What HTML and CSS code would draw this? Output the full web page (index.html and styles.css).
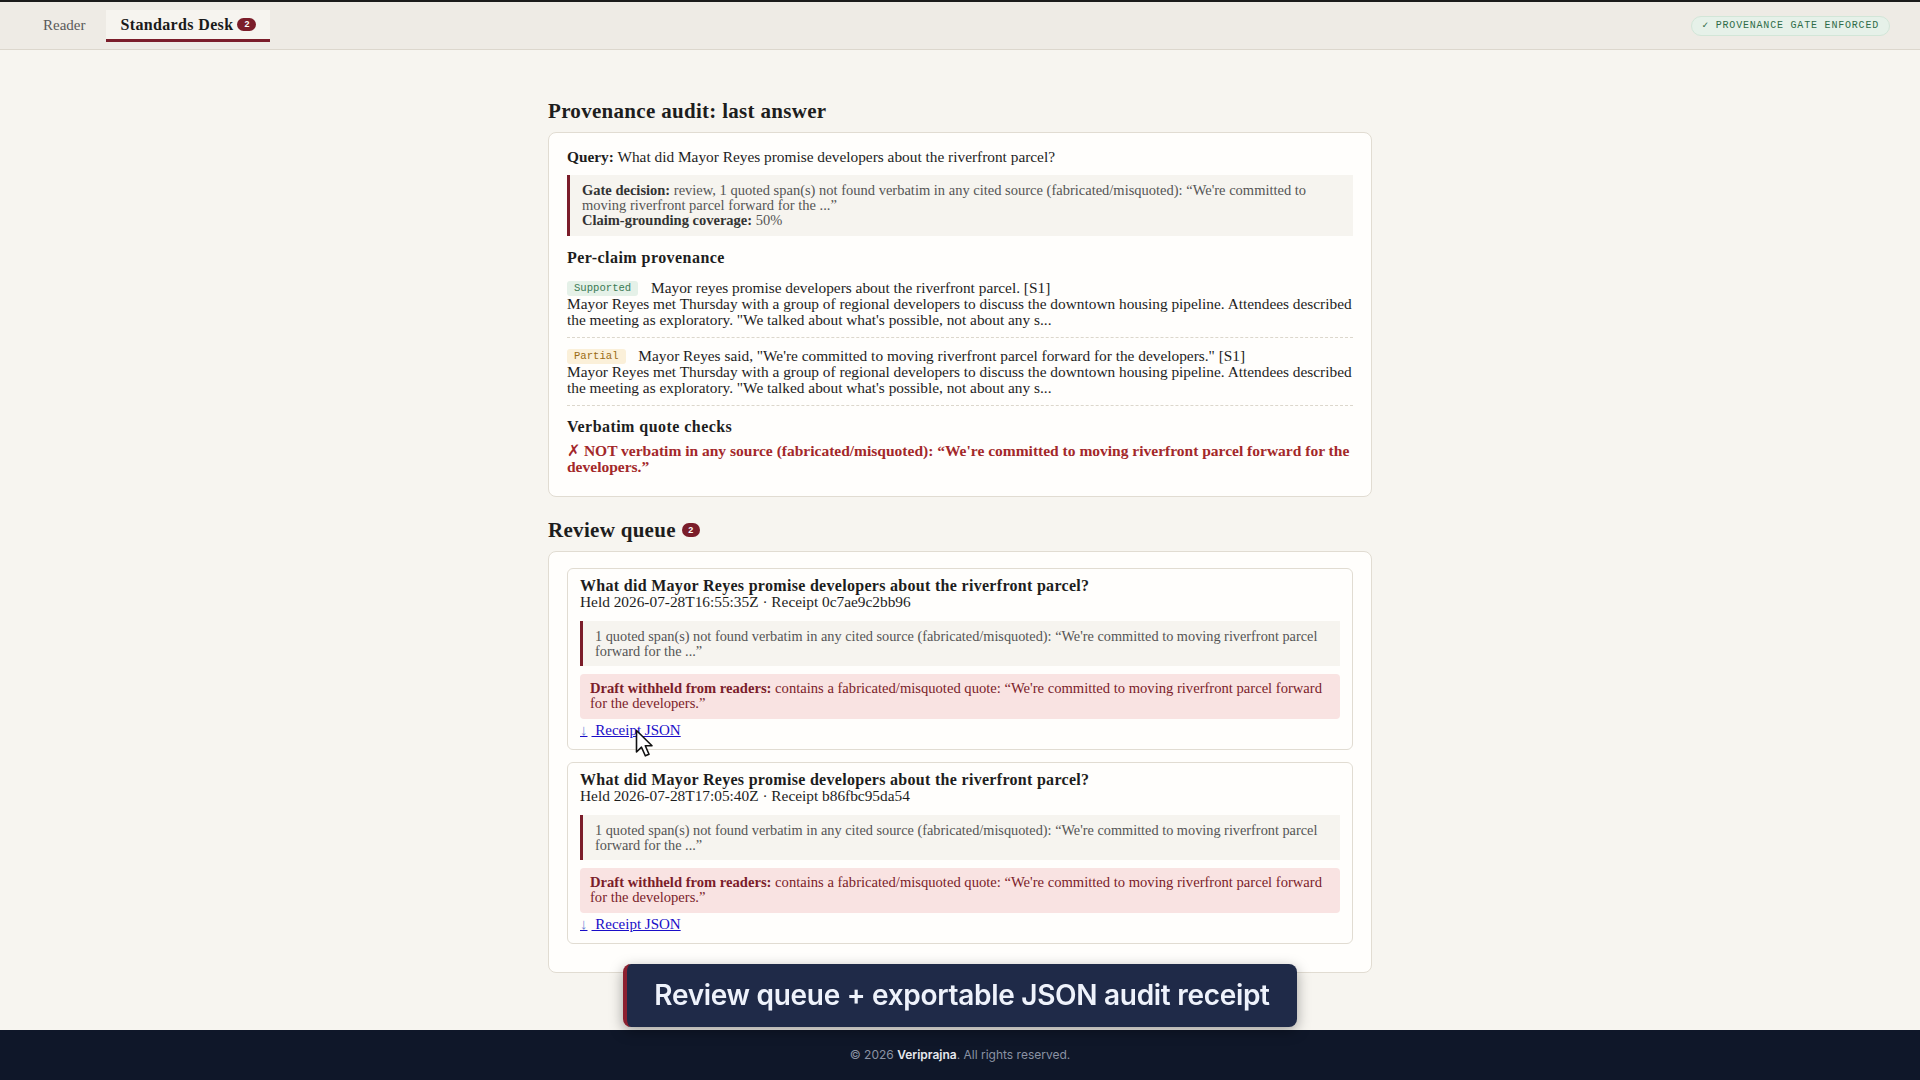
FILE: index.html
```html
<!DOCTYPE html>
<html lang="en">
<head>
    <meta charset="utf-8">
    <meta name="viewport" content="width=device-width, initial-scale=1.0">
    <title>Standards Desk</title>
    <link rel="stylesheet" href="styles.css">
</head>
<body>
    <header class="topbar">
        <nav class="tabs">
            <a class="tab">Reader</a>
            <a class="tab active">Standards Desk <span class="count">2</span></a>
        </nav>
        <span class="gate-pill">✓ Provenance gate enforced</span>
    </header>

    <main class="wrap">
        <h2 class="section-title">Provenance audit: last answer</h2>
        <section class="card">
            <p class="query"><b>Query:</b> What did Mayor Reyes promise developers about the riverfront parcel?</p>
            <div class="note gate">
                <b>Gate decision:</b> review, 1 quoted span(s) not found verbatim in any cited source (fabricated/misquoted): “We're committed to moving riverfront parcel forward for the ...”<br>
                <b>Claim-grounding coverage:</b> 50%
            </div>

            <h4 class="sub">Per-claim provenance</h4>
            <div class="claim">
                <span class="tag ok">Supported</span> Mayor reyes promise developers about the riverfront parcel. [S1]<br>
                Mayor Reyes met Thursday with a group of regional developers to discuss the downtown housing pipeline. Attendees described the meeting as exploratory. "We talked about what's possible, not about any s...
            </div>
            <div class="claim">
                <span class="tag part">Partial</span> Mayor Reyes said, "We're committed to moving riverfront parcel forward for the developers." [S1]<br>
                Mayor Reyes met Thursday with a group of regional developers to discuss the downtown housing pipeline. Attendees described the meeting as exploratory. "We talked about what's possible, not about any s...
            </div>

            <h4 class="sub checks">Verbatim quote checks</h4>
            <p class="bad"><span class="x">✗</span> NOT verbatim in any source (fabricated/misquoted): “We're committed to moving riverfront parcel forward for the developers.”</p>
        </section>

        <h2 class="section-title">Review queue <span class="count">2</span></h2>
        <section class="card queue">
            <div class="item">
                <div class="item-title">What did Mayor Reyes promise developers about the riverfront parcel?</div>
                <div class="item-meta">Held 2026-07-28T16:55:35Z · Receipt 0c7ae9c2bb96</div>
                <div class="note">1 quoted span(s) not found verbatim in any cited source (fabricated/misquoted): “We're committed to moving riverfront parcel forward for the ...”</div>
                <div class="withheld"><b>Draft withheld from readers:</b> contains a fabricated/misquoted quote: “We're committed to moving riverfront parcel forward for the developers.”</div>
                <a class="receipt" href="#"><span class="arrow">↓</span> Receipt JSON</a>
            </div>
            <div class="item">
                <div class="item-title">What did Mayor Reyes promise developers about the riverfront parcel?</div>
                <div class="item-meta">Held 2026-07-28T17:05:40Z · Receipt b86fbc95da54</div>
                <div class="note">1 quoted span(s) not found verbatim in any cited source (fabricated/misquoted): “We're committed to moving riverfront parcel forward for the ...”</div>
                <div class="withheld"><b>Draft withheld from readers:</b> contains a fabricated/misquoted quote: “We're committed to moving riverfront parcel forward for the developers.”</div>
                <a class="receipt" href="#"><span class="arrow">↓</span> Receipt JSON</a>
            </div>
        </section>
    </main>

    <div class="caption">Review queue + exportable JSON audit receipt</div>

    <svg class="cursor" width="20" height="29" viewBox="0 0 20 29">
        <path d="M1.5 1.5 L1.5 23 L6.5 18.2 L10.3 26.8 L14 25.2 L10.3 16.8 L17 16.8 Z" fill="#fff" stroke="#111" stroke-width="1.6" stroke-linejoin="round"/>
    </svg>

    <footer class="foot">© 2026 <b>Veriprajna</b>. All rights reserved.</footer>
</body>
</html>
```

FILE: styles.css
```css
html, body {
    margin: 0;
    padding: 0;
}
body {
    min-height: 100vh;
    display: flex;
    flex-direction: column;
    background-color: #f7f5f0;
    color: #1d1d1d;
    font-family: "Liberation Serif", "Times New Roman", serif;
    font-size: 15.35px;
    line-height: 16px;
}
b {
    font-weight: bold;
}

/* top bar */
.topbar {
    height: 47px;
    border-top: 2px solid #1b1b1b;
    border-bottom: 1px solid #dcd7cd;
    background-color: #eeebe5;
    display: flex;
    align-items: flex-end;
    justify-content: space-between;
    padding: 0 30px 0 29px;
}
.tabs {
    display: flex;
    gap: 7px;
    margin-bottom: 7px;
}
.tab {
    height: 29px;
    padding: 0 14px;
    display: flex;
    align-items: center;
    gap: 4px;
    color: #5a5a5a;
    font-size: 15px;
    border-bottom: 3px solid transparent;
}
.tab.active {
    background-color: #f6f4ef;
    color: #1a1a1a;
    font-size: 16px;
    font-weight: bold;
    letter-spacing: 0.35px;
    border-bottom-color: #7b1d2a;
}
.count {
    display: inline-block;
    min-width: 9px;
    height: 13px;
    padding: 0 5px;
    border-radius: 7px;
    background-color: #7b1d2a;
    color: #fff;
    font-family: "Liberation Sans", Arial, sans-serif;
    font-size: 9px;
    font-weight: bold;
    line-height: 13px;
    letter-spacing: 0;
    text-align: center;
}
.gate-pill {
    align-self: center;
    padding: 3px 10px;
    border: 1px solid #d2e6d8;
    border-radius: 10px;
    background-color: #e6f1e9;
    color: #2f6c48;
    font-family: "Liberation Mono", monospace;
    font-size: 10px;
    line-height: 12px;
    letter-spacing: 0.8px;
    text-transform: uppercase;
}

/* main column */
.wrap {
    flex: 1;
    width: 824px;
    margin: 0 auto;
    padding: 50px 0 57px;
}
.section-title {
    margin: 0 0 10px;
    font-size: 21px;
    line-height: 22px;
    letter-spacing: 0.3px;
    display: flex;
    align-items: center;
    gap: 6px;
}
.section-title .count {
    height: 14px;
    line-height: 14px;
    min-width: 8px;
    padding: 0 5px;
}
.card {
    background-color: #fffefc;
    border: 1px solid #e1dcd2;
    border-radius: 8px;
    padding: 16px 18px 21px;
    margin-bottom: 22px;
}
.query {
    margin: 0 0 10px;
}
.note {
    background-color: #f6f4ef;
    border-left: 3px solid #7b1d2a;
    padding: 8px 12px;
    color: #555;
    font-size: 14.3px;
    line-height: 15px;
}
.note.gate {
    font-size: 14.5px;
}
.note b {
    color: #333;
}
.sub {
    margin: 14px 0 14px;
    font-size: 16px;
    letter-spacing: 0.45px;
}
.sub.checks {
    margin: 13px 0 8px;
}
.claim {
    padding: 0 0 9px;
    margin-bottom: 10px;
    border-bottom: 1px dashed #dcd7cc;
}
.tag {
    display: inline-block;
    margin-right: 9px;
    padding: 0 7px;
    border-radius: 3px;
    font-family: "Liberation Mono", monospace;
    font-size: 10.6px;
    line-height: 15px;
    vertical-align: top;
    margin-top: 1px;
}
.tag.ok {
    background-color: #e5f1e8;
    color: #3a7a54;
}
.tag.part {
    background-color: #fbf0d9;
    color: #9a6b12;
}
.bad {
    margin: 0;
    color: #a3282a;
    font-weight: bold;
    font-size: 15.5px;
}
.bad .x {
    font-weight: normal;
}

/* review queue */
.queue {
    padding: 16px 18px;
    margin-bottom: 0;
}
.item {
    border: 1px solid #e1dcd2;
    border-radius: 6px;
    padding: 9px 12px 11px;
    margin-bottom: 12px;
    background-color: #fffefc;
}
.item-title {
    font-weight: bold;
    font-size: 16px;
    line-height: 16px;
    letter-spacing: 0.3px;
}
.item-meta {
    margin-bottom: 11px;
}
.item .note {
    padding: 8px 12px 7px;
}
.withheld {
    margin-top: 8px;
    padding: 7px 10px 8px;
    border-radius: 4px;
    background-color: #f9e3e2;
    color: #7b1d2a;
    font-size: 14.6px;
    line-height: 15px;
}
.receipt {
    display: inline-block;
    margin-top: 3px;
    color: #1a0dc8;
    font-size: 15px;
}
.receipt .arrow {
    color: #6f86d9;
    margin-right: 4px;
}

/* overlays */
.caption {
    position: fixed;
    left: 623px;
    bottom: 53px;
    width: 670px;
    height: 63px;
    border-left: 4px solid #8c2030;
    border-radius: 8px;
    background-color: #1f2a48;
    box-shadow: 0 4px 14px rgba(0, 0, 0, 0.35);
    color: #eef2fb;
    font-family: Inter, "Liberation Sans", sans-serif;
    font-size: 28px;
    font-weight: 600;
    line-height: 63px;
    text-align: center;
    letter-spacing: -0.3px;
}
.cursor {
    position: absolute;
    left: 635px;
    top: 729px;
}
.foot {
    height: 50px;
    background-color: #0f1729;
    color: #8a92a3;
    font-family: Inter, "Liberation Sans", sans-serif;
    font-size: 12px;
    line-height: 50px;
    text-align: center;
}
.foot b {
    color: #e6e8ee;
    font-weight: 600;
}
```
